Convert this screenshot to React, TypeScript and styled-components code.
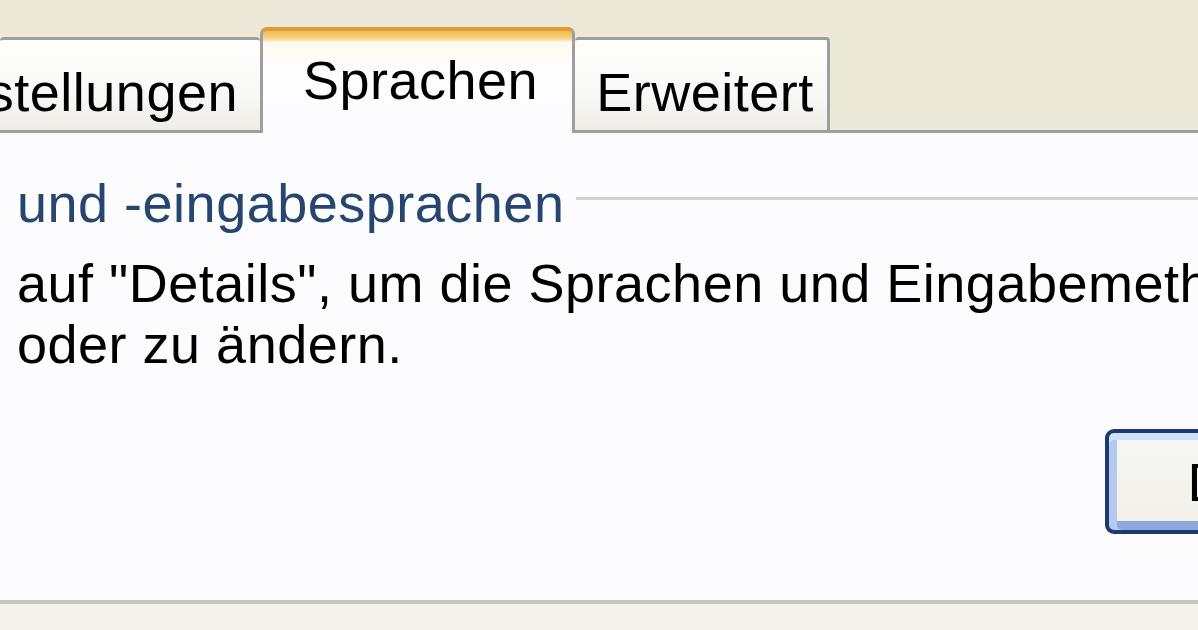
import React from 'react';
import styled, { createGlobalStyle } from 'styled-components';

const GlobalStyle = createGlobalStyle`
    html, body {
        margin: 0;
        padding: 0;
        background: #ece9d8;
    }
    * {
        box-sizing: border-box;
    }
`;

const tabs = [
    { label: 'Regionale Einstellungen', width: 260, align: 'flex-end' },
    { label: 'Sprachen', width: 315, align: 'center', active: true },
    { label: 'Erweitert', width: 255, align: 'center' },
];

const App = () => {
    return (
        <Window>
            <GlobalStyle />
            <TabStrip>
                {tabs.map((tab, index) => (
                    <Tab
                        key={index}
                        $active={!!tab.active}
                        $width={tab.width}
                        $align={tab.align}
                        $last={index === tabs.length - 1}
                    >
                        {tab.label}
                    </Tab>
                ))}
            </TabStrip>
            <Panel>
                <GroupHeader>
                    <GroupTitle>und -eingabesprachen</GroupTitle>
                    <GroupRule />
                </GroupHeader>
                <Description>
                    <Line>auf "Details", um die Sprachen und Eingabemethoden anzuzeigen</Line>
                    <Line>oder zu ändern.</Line>
                </Description>
                <ButtonRow>
                    <DetailsButton>Details...</DetailsButton>
                </ButtonRow>
            </Panel>
            <Footer />
        </Window>
    );
};

export default App;

// Styled Components
const Window = styled.div`
    display: flex;
    flex-direction: column;
    width: 1198px;
    height: 630px;
    overflow: hidden;
    background: #ece9d8;
    font-family: "Liberation Sans", Arial, sans-serif;
    font-size: 54px;
    letter-spacing: 0.5px;
    color: #000;
`;

const TabStrip = styled.div`
    display: flex;
    align-items: flex-end;
    height: 130px;
    flex: none;
    position: relative;
    z-index: 2;
`;

const Tab = styled.div<{ $active: boolean; $width: number; $align: string; $last: boolean }>`
    display: flex;
    justify-content: ${(p) => p.$align};
    align-items: flex-start;
    flex: none;
    width: ${(p) => p.$width}px;
    overflow: hidden;
    white-space: nowrap;
    line-height: 54px;
    border: 3px solid #9ba09f;
    border-bottom: none;
    border-left: ${(p) => (p.$active ? '3px solid #9ba09f' : 'none')};
    border-right: ${(p) => (p.$active || p.$last ? '3px solid #9ba09f' : 'none')};

    ${(p) =>
        p.$active
            ? `
        height: 106px;
        margin-bottom: -3px;
        padding-top: 22px;
        padding-left: 6px;
        border-top: 4px solid #dc9b36;
        border-radius: 7px 7px 0 0;
        background: linear-gradient(#f3bb52 0, #f8cc74 6px, #fcdfa8 9px, #fffaf0 11px, #fdfdfe 40%, #fcfcfe 100%);
    `
            : `
        height: 93px;
        padding-top: 25px;
        padding-right: ${p.$align === 'flex-end' ? '22px' : '0'};
        padding-left: ${p.$align === 'center' ? '8px' : '0'};
        border-radius: 4px 4px 0 0;
        background: linear-gradient(#fefefe 0, #f8f8f5 60%, #eeede7 100%);
    `}
`;

const Panel = styled.div`
    flex: none;
    height: 474px;
    padding: 43px 0 0 17px;
    background: #fcfcfe;
    border-top: 3px solid #9ba09f;
    border-bottom: 4px solid #c6c6bc;
    display: flex;
    flex-direction: column;
`;

const GroupHeader = styled.div`
    display: flex;
    align-items: flex-start;
    gap: 12px;
    white-space: nowrap;
`;

const GroupTitle = styled.span`
    line-height: 54px;
    color: #27466f;
`;

const GroupRule = styled.div`
    flex: 1;
    height: 3px;
    margin-top: 21px;
    background: #d3d3c8;
`;

const Description = styled.div`
    margin-top: 23px;
    line-height: 61px;
    white-space: nowrap;
`;

const Line = styled.div``;

const ButtonRow = styled.div`
    display: flex;
    margin-top: 54px;
    padding-left: 1088px;
`;

const DetailsButton = styled.div`
    flex: none;
    display: flex;
    align-items: center;
    justify-content: center;
    width: 380px;
    height: 105px;
    border: 4px solid #1d3a6c;
    border-radius: 9px;
    background: linear-gradient(#f7f7f4, #f1f0ea);
    box-shadow:
        inset 0 7px 0 #cfe0f9,
        inset 8px 0 0 #b4caef,
        inset 0 -9px 0 #8ea8dc;
    line-height: 54px;
    white-space: nowrap;
`;

const Footer = styled.div`
    flex: 1;
    background: #f5f4ec;
`;
